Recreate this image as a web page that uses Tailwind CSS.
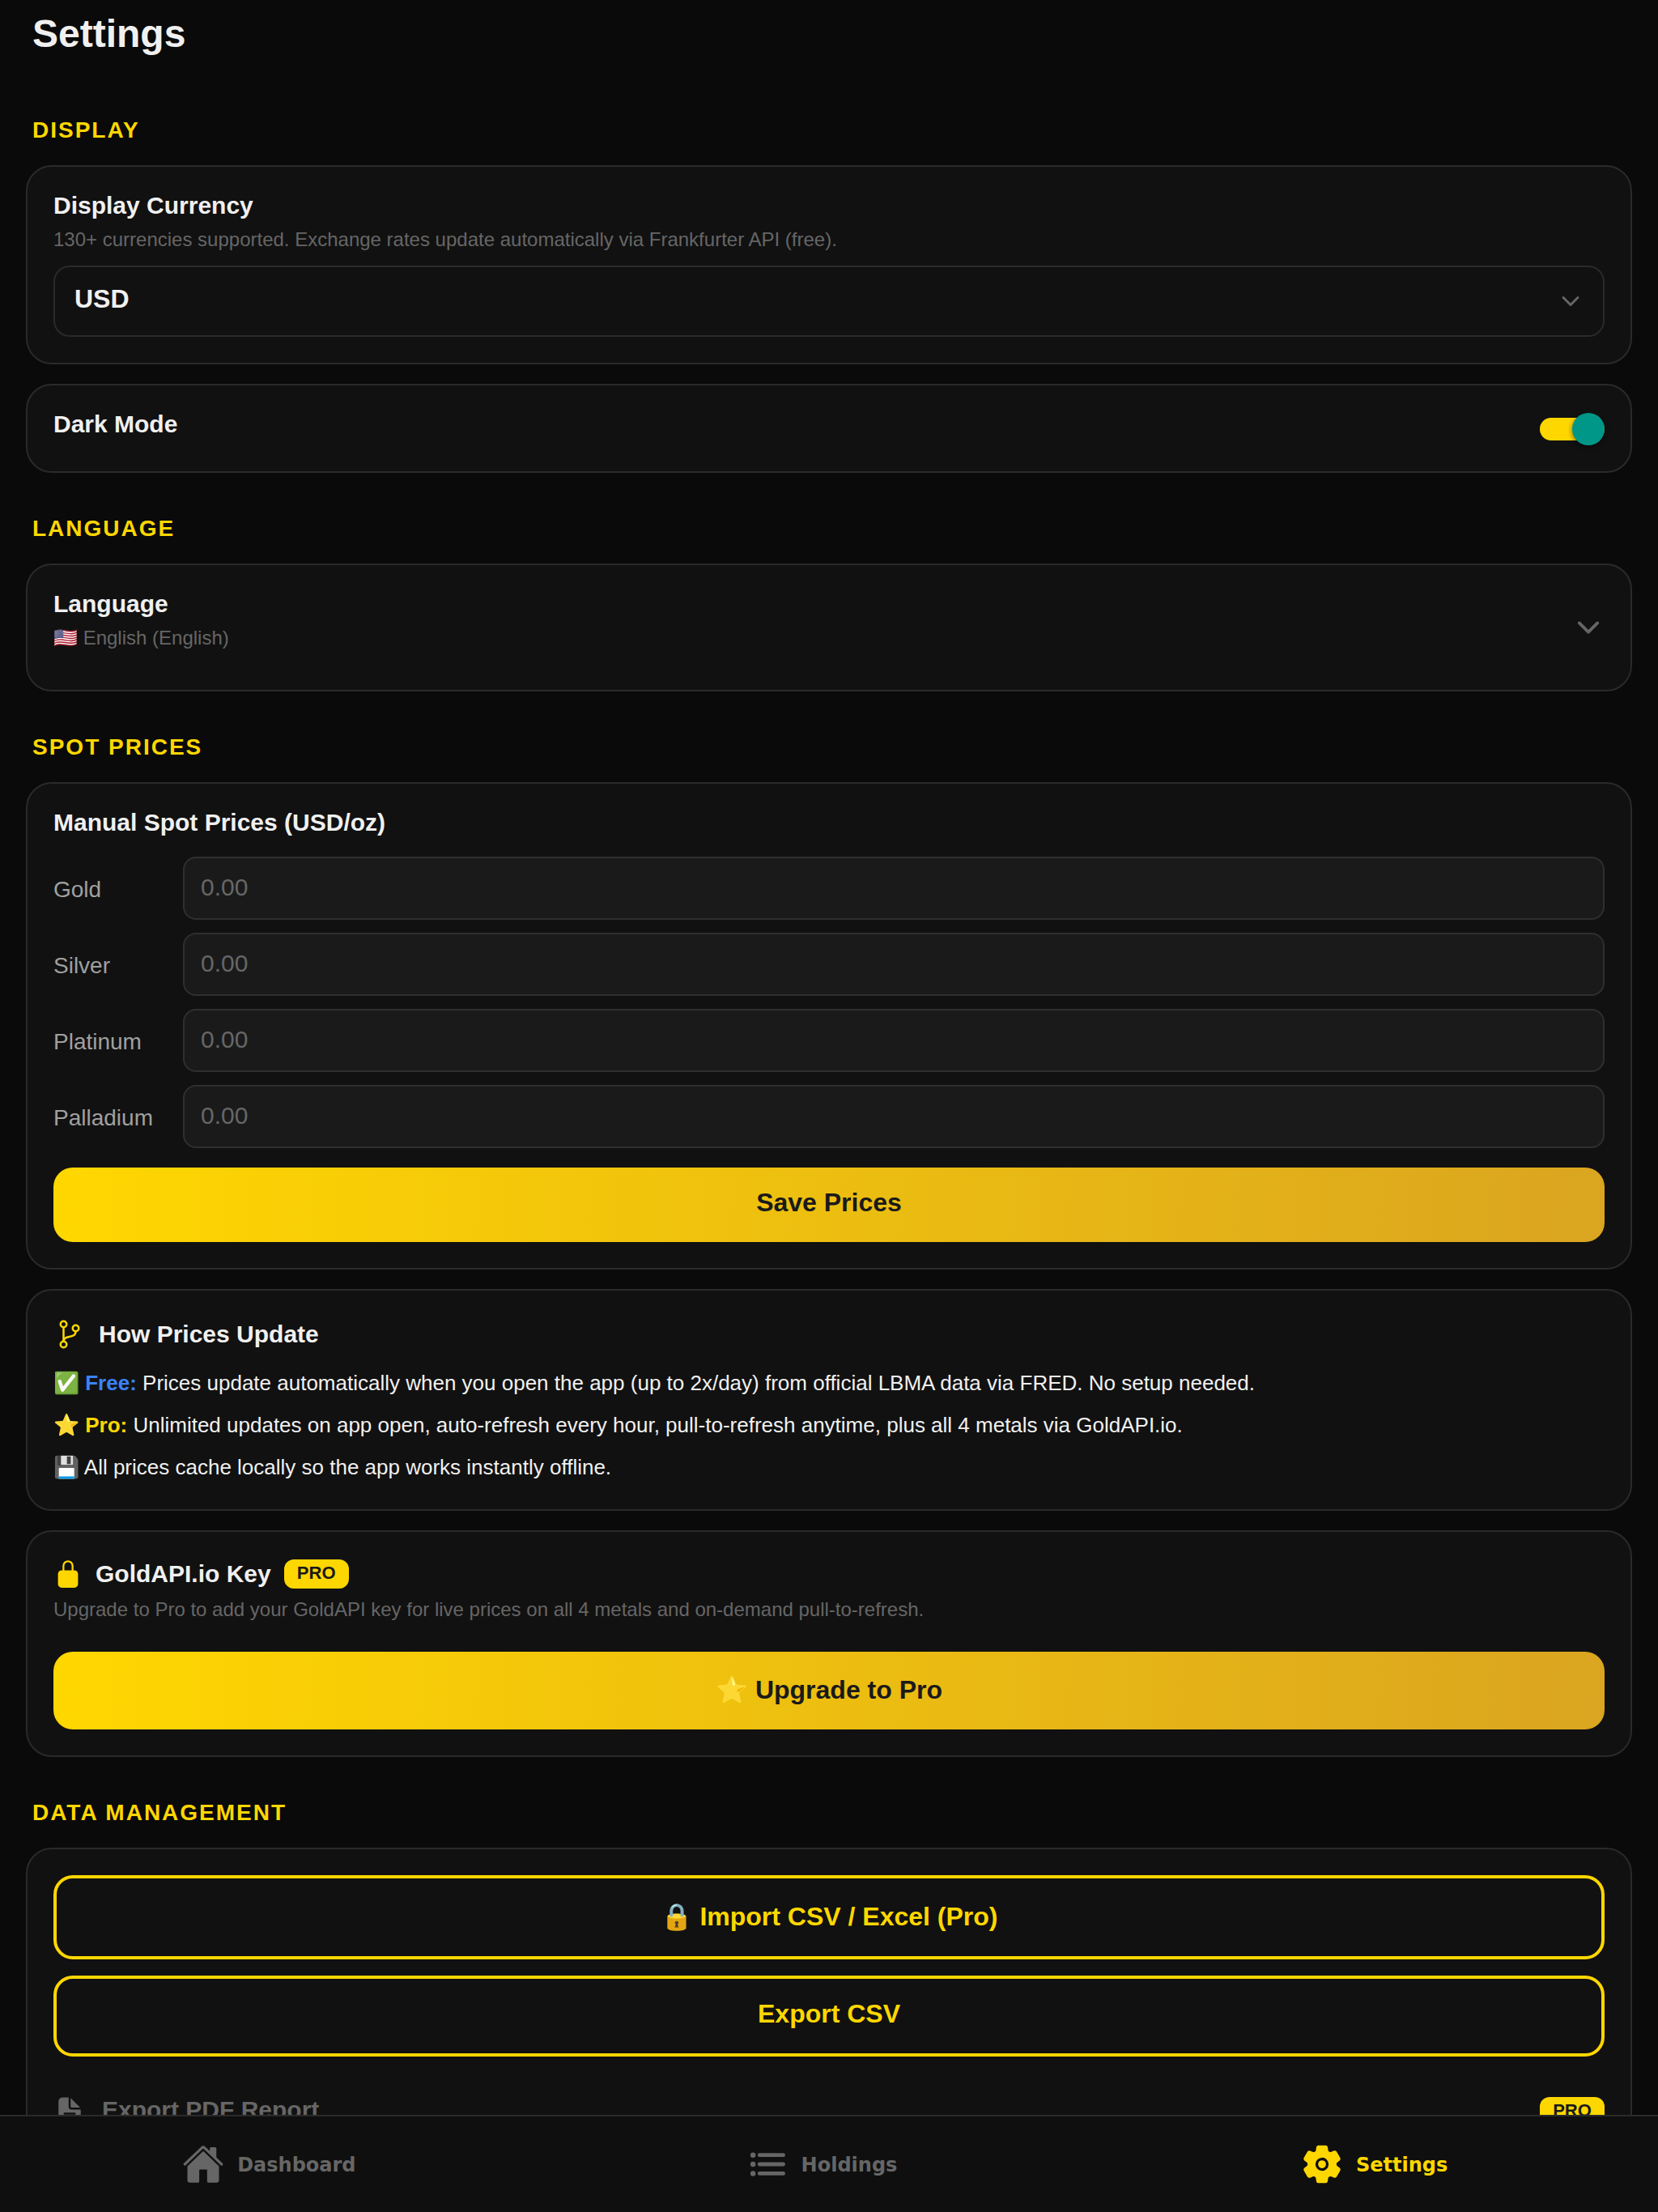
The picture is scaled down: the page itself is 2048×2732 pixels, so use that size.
<!DOCTYPE html>
<html lang="en">
<head>
<meta charset="utf-8">
<meta name="viewport" content="width=device-width, initial-scale=1">
<title>Settings</title>
<script src="https://cdn.jsdelivr.net/npm/@tailwindcss/browser@4"></script>
</head>
<body class="flex h-screen flex-col bg-[#0a0a0a] font-['Liberation_Sans',Arial,sans-serif] text-[#f0f0f0]">

<main class="min-h-0 flex-1 overflow-y-auto px-8 pt-3.5 [scrollbar-width:none]">
  <h1 class="px-2 text-[48px] leading-[56px] font-bold">Settings</h1>

  <section>
    <h2 class="mt-[75px] mb-[27px] px-2 text-[28px] leading-8 font-bold tracking-[2px] text-[#ffd700]">DISPLAY</h2>
    <div class="rounded-[32px] border-2 border-[#2a2a2a] bg-[#111111] p-8">
      <label for="currency" class="block text-[30px] leading-8 font-bold">Display Currency</label>
      <p class="mt-2.5 text-[24px] leading-8 text-[#666666]">130+ currencies supported. Exchange rates update automatically via Frankfurter API (free).</p>
      <div class="mt-4 grid items-center">
        <select id="currency" class="col-start-1 row-start-1 h-[88px] w-full appearance-none rounded-[20px] border-2 border-[#2a2a2a] bg-[#111111] px-6 pb-1.5 text-[32px] font-bold">
          <option>USD</option>
        </select>
        <svg class="pointer-events-none col-start-1 row-start-1 mr-[26px] size-8 justify-self-end" viewBox="0 0 512 512" fill="none" stroke="#666666" stroke-width="48" stroke-linecap="round" stroke-linejoin="round" aria-hidden="true"><path d="M112 184l144 144 144-144"/></svg>
      </div>
    </div>
    <div class="mt-6 flex items-center justify-between rounded-[32px] border-2 border-[#2a2a2a] bg-[#111111] p-8">
      <label for="dark" class="pb-2.5 text-[30px] leading-8 font-bold">Dark Mode</label>
      <input id="dark" type="checkbox" role="switch" checked class="relative mt-0.5 h-7 w-20 appearance-none rounded-full bg-[#3a3a3a] checked:bg-[#ffd700] after:absolute after:-top-1.5 after:left-0 after:size-10 after:rounded-full after:bg-[#fafafa] after:shadow-[0_2px_6px_rgba(0,0,0,0.5)] checked:after:left-10 checked:after:bg-[#009688]">
    </div>
  </section>

  <section>
    <h2 class="mt-[53px] mb-[27px] px-2 text-[28px] leading-8 font-bold tracking-[2px] text-[#ffd700]">LANGUAGE</h2>
    <button type="button" class="flex w-full items-center justify-between rounded-[32px] border-2 border-[#2a2a2a] bg-[#111111] p-8 text-left">
      <span class="pb-4">
        <span class="block text-[30px] leading-8 font-bold">Language</span>
        <span class="mt-2.5 block text-[24px] leading-8 text-[#666666]">🇺🇸 English (English)</span>
      </span>
      <svg class="size-10" viewBox="0 0 512 512" fill="none" stroke="#666666" stroke-width="48" stroke-linecap="round" stroke-linejoin="round" aria-hidden="true"><path d="M112 184l144 144 144-144"/></svg>
    </button>
  </section>

  <section>
    <h2 class="mt-[53px] mb-[27px] px-2 text-[28px] leading-8 font-bold tracking-[2px] text-[#ffd700]">SPOT PRICES</h2>
    <form class="rounded-[32px] border-2 border-[#2a2a2a] bg-[#111111] p-8">
      <h3 class="text-[30px] leading-8 font-bold">Manual Spot Prices (USD/oz)</h3>
      <div class="mt-[26px] flex flex-col gap-4">
        <div class="flex items-center">
          <label for="gold" class="w-40 pt-1 text-[28px] leading-8 text-[#a0a0a0]">Gold</label>
          <input id="gold" type="text" inputmode="decimal" placeholder="0.00" class="h-[78px] min-w-0 flex-1 rounded-2xl border-2 border-[#2f2f2f] bg-[#1a1a1a] px-5 pb-0.5 text-[30px] placeholder:text-[#666666]">
        </div>
        <div class="flex items-center">
          <label for="silver" class="w-40 pt-1 text-[28px] leading-8 text-[#a0a0a0]">Silver</label>
          <input id="silver" type="text" inputmode="decimal" placeholder="0.00" class="h-[78px] min-w-0 flex-1 rounded-2xl border-2 border-[#2f2f2f] bg-[#1a1a1a] px-5 pb-0.5 text-[30px] placeholder:text-[#666666]">
        </div>
        <div class="flex items-center">
          <label for="platinum" class="w-40 pt-1 text-[28px] leading-8 text-[#a0a0a0]">Platinum</label>
          <input id="platinum" type="text" inputmode="decimal" placeholder="0.00" class="h-[78px] min-w-0 flex-1 rounded-2xl border-2 border-[#2f2f2f] bg-[#1a1a1a] px-5 pb-0.5 text-[30px] placeholder:text-[#666666]">
        </div>
        <div class="flex items-center">
          <label for="palladium" class="w-40 pt-1 text-[28px] leading-8 text-[#a0a0a0]">Palladium</label>
          <input id="palladium" type="text" inputmode="decimal" placeholder="0.00" class="h-[78px] min-w-0 flex-1 rounded-2xl border-2 border-[#2f2f2f] bg-[#1a1a1a] px-5 pb-0.5 text-[30px] placeholder:text-[#666666]">
        </div>
      </div>
      <button type="button" class="mt-6 h-[92px] w-full rounded-3xl bg-[linear-gradient(93deg,#ffd700,#daa520)] pb-1.5 text-[32px] leading-9 font-bold text-[#1a1a1a]">Save Prices</button>
    </form>

    <div class="mt-6 rounded-[32px] border-2 border-[#2a2a2a] bg-[#111111] px-8 pt-8 pb-[30px]">
      <div class="mb-4 flex h-11 items-center gap-4">
        <svg class="size-10" viewBox="0 0 512 512" fill="none" stroke="#ffd700" stroke-width="32" stroke-linecap="round" stroke-linejoin="round" aria-hidden="true"><circle cx="160" cy="96" r="48"/><circle cx="160" cy="416" r="48"/><path d="M160 368V144"/><circle cx="352" cy="160" r="48"/><path d="M352 208c0 128-192 48-192 160"/></svg>
        <h3 class="text-[30px] leading-[34px] font-bold">How Prices Update</h3>
      </div>
      <div class="flex flex-col gap-2 text-[26px] leading-[44px]">
        <p>✅ <b class="text-[#3b82f6]">Free:</b> Prices update automatically when you open the app (up to 2x/day) from official LBMA data via FRED. No setup needed.</p>
        <p>⭐ <b class="text-[#ffd700]">Pro:</b> Unlimited updates on app open, auto-refresh every hour, pull-to-refresh anytime, plus all 4 metals via GoldAPI.io.</p>
        <p>💾 All prices cache locally so the app works instantly offline.</p>
      </div>
    </div>

    <div class="mt-6 rounded-[32px] border-2 border-[#2a2a2a] bg-[#111111] p-8">
      <div class="flex h-10 items-center gap-4">
        <svg class="size-9" viewBox="0 0 512 512" fill="#ffd700" aria-hidden="true"><path d="M368 192h-16v-80a96 96 0 10-192 0v80h-16a64.07 64.07 0 00-64 64v176a64.07 64.07 0 0064 64h224a64.07 64.07 0 0064-64V256a64.07 64.07 0 00-64-64zm-48 0H192v-80a64 64 0 11128 0z"/></svg>
        <h3 class="text-[30px] leading-[34px] font-bold">GoldAPI.io Key</h3>
        <span class="h-9 w-20 rounded-xl bg-[#ffd700] text-center text-[22px] leading-[34px] font-bold text-[#1a1a1a]">PRO</span>
      </div>
      <p class="mt-2 text-[24px] leading-8 text-[#666666]">Upgrade to Pro to add your GoldAPI key for live prices on all 4 metals and on-demand pull-to-refresh.</p>
      <button type="button" class="mt-9 h-24 w-full rounded-3xl bg-[linear-gradient(93deg,#ffd700,#daa520)] pb-0.5 text-[32px] leading-9 font-bold text-[#1a1a1a]">⭐ Upgrade to Pro</button>
    </div>
  </section>

  <section>
    <h2 class="mt-[53px] mb-[27px] px-2 text-[28px] leading-8 font-bold tracking-[2px] text-[#ffd700]">DATA MANAGEMENT</h2>
    <div class="rounded-[32px] border-2 border-[#2a2a2a] bg-[#111111] p-8">
      <button type="button" class="h-[104px] w-full rounded-3xl border-4 border-[#ffd700] pb-0.5 text-[32px] leading-9 font-bold text-[#ffd700]">🔒 Import CSV / Excel (Pro)</button>
      <button type="button" class="mt-5 h-[100px] w-full rounded-3xl border-4 border-[#ffd700] pb-1.5 text-[32px] leading-9 font-bold text-[#ffd700]">Export CSV</button>
      <button type="button" class="mt-5 flex w-full items-center gap-5 py-7 text-left text-[#666666]">
        <svg class="size-10" viewBox="0 0 512 512" fill="currentColor" aria-hidden="true"><path d="M428 224H288a48 48 0 01-48-48V36a4 4 0 00-4-4h-92a64 64 0 00-64 64v320a64 64 0 0064 64h224a64 64 0 0064-64V228a4 4 0 00-4-4zm-92 160H176a16 16 0 010-32h160a16 16 0 010 32zm0-80H176a16 16 0 010-32h160a16 16 0 010 32z"/><path d="M419.22 188.59L275.41 44.78a2 2 0 00-3.41 1.41V176a16 16 0 0016 16h129.81a2 2 0 001.41-3.41z"/></svg>
        <span class="flex-1 pb-1 text-[30px] leading-[34px] font-bold">Export PDF Report</span>
        <span class="h-9 w-20 rounded-xl bg-[#ffd700] text-center text-[22px] leading-[34px] font-bold text-[#1a1a1a]">PRO</span>
      </button>
    </div>
  </section>
</main>

<nav class="grid h-[120px] shrink-0 grid-cols-3 border-t-2 border-[#2a2a2a] bg-[#0f0f0f] font-['DejaVu_Sans',sans-serif] text-[24px] leading-7 font-bold text-[#666666]">
  <a href="#dashboard" class="flex items-center justify-center gap-4 pr-[18px]">
    <svg class="size-[52px]" viewBox="0 0 512 512" fill="currentColor" aria-hidden="true"><path d="M261.56 101.28a8 8 0 00-11.06 0L66.4 277.15a8 8 0 00-2.47 5.79L63.9 448a32 32 0 0032 32H192a16 16 0 0016-16V328a8 8 0 018-8h80a8 8 0 018 8v136a16 16 0 0016 16h96.06a32 32 0 0032-32V282.94a8 8 0 00-2.47-5.79z"/><path d="M490.91 244.15l-74.8-71.56V64a16 16 0 00-16-16h-48a16 16 0 00-16 16v32l-57.92-55.38C272.77 35.14 264.71 32 256 32c-8.68 0-16.72 3.14-22.14 8.63l-212.7 203.5c-6.22 6-7 15.87-1.34 22.37A16 16 0 0043 267.56L250.5 69.28a8 8 0 0111.06 0l207.52 198.28a16 16 0 0022.59-.44c6.14-6.36 5.63-16.86-.76-22.97z"/></svg>
    <span class="pt-0.5">Dashboard</span>
  </a>
  <a href="#holdings" class="flex items-center justify-center gap-4 pr-[18px]">
    <svg class="size-[52px]" viewBox="0 0 512 512" fill="currentColor" stroke="currentColor" stroke-width="48" stroke-linecap="round" aria-hidden="true"><path d="M160 144h288M160 256h288M160 368h288"/><g stroke-width="32"><circle cx="80" cy="144" r="16"/><circle cx="80" cy="256" r="16"/><circle cx="80" cy="368" r="16"/></g></svg>
    <span class="pt-0.5">Holdings</span>
  </a>
  <a href="#settings" aria-current="page" class="flex items-center justify-center gap-4 pr-[18px] text-[#ffd700]">
    <svg class="size-[52px]" viewBox="0 0 512 512" fill="currentColor" aria-hidden="true"><circle cx="256" cy="256" r="48"/><path d="M470.39,300l-.47-.38-31.56-24.75a16.11,16.11,0,0,1-6.1-13.33l0-11.56a16,16,0,0,1,6.11-13.22L469.92,212l.47-.38a26.68,26.68,0,0,0,5.9-34.06l-42.71-73.9a1.59,1.59,0,0,1-.13-.22A26.86,26.86,0,0,0,401,92.14l-.35.13L363.55,107.2a15.94,15.94,0,0,1-14.47-1.29q-4.92-3.1-10-5.86a15.94,15.94,0,0,1-8.19-11.82L325.3,48.64l-.12-.72A27.22,27.22,0,0,0,298.76,26H213.24a26.92,26.92,0,0,0-26.45,22.39l-.09.56-5.57,39.67A16,16,0,0,1,173,100.44c-3.42,1.84-6.76,3.79-10,5.82a15.92,15.92,0,0,1-14.43,1.27l-37.13-15-.35-.14a26.87,26.87,0,0,0-32.48,11.34l-.13.22L35.71,177.9A26.71,26.71,0,0,0,41.61,212l.47.38,31.56,24.75a16.11,16.11,0,0,1,6.1,13.33l0,11.56a16,16,0,0,1-6.11,13.22L42.08,300l-.47.38a26.68,26.68,0,0,0-5.9,34.06l42.71,73.9a1.59,1.59,0,0,1,.13.22A26.86,26.86,0,0,0,111,419.86l.35-.13,37.07-14.93a15.94,15.94,0,0,1,14.47,1.29q4.92,3.11,10,5.86a15.94,15.94,0,0,1,8.19,11.82l5.56,39.59.12.72A27.22,27.22,0,0,0,213.24,486h85.52a26.92,26.92,0,0,0,26.45-22.39l.09-.56,5.57-39.67a16,16,0,0,1,8.18-11.82c3.42-1.84,6.76-3.79,10-5.82a15.92,15.92,0,0,1,14.43-1.27l37.13,14.95.35.14a26.85,26.85,0,0,0,32.48-11.34,2.53,2.53,0,0,1,.13-.22l42.71-73.89A26.7,26.7,0,0,0,470.39,300ZM335.91,259.76a80,80,0,1,1-83.66-83.67A80.21,80.21,0,0,1,335.91,259.76Z"/></svg>
    <span class="pt-0.5">Settings</span>
  </a>
</nav>

</body>
</html>
